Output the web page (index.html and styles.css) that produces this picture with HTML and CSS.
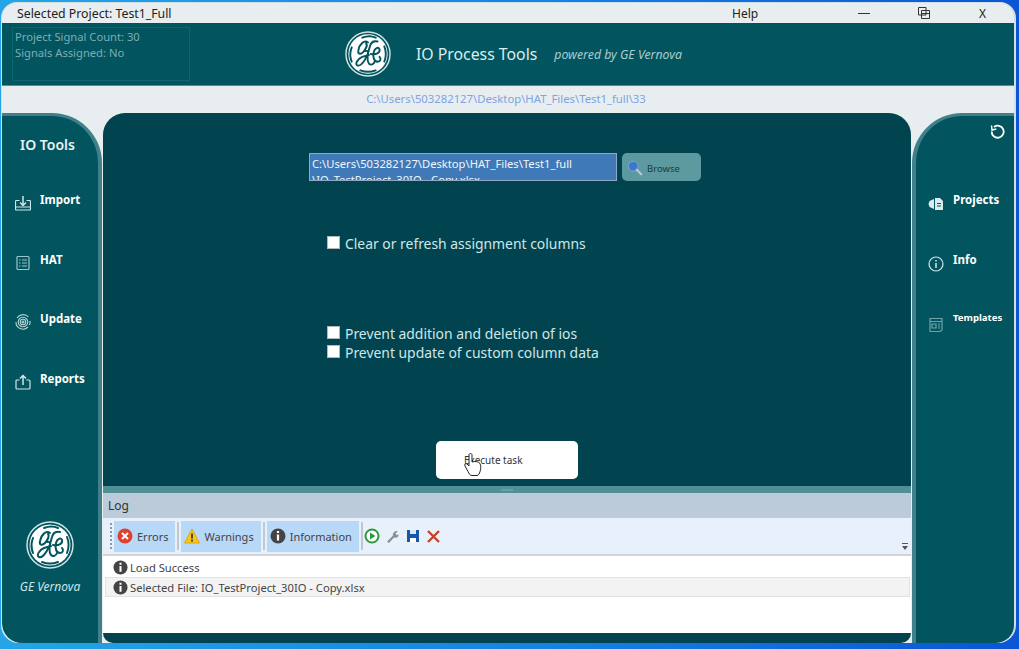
FILE: index.html
```html
<!DOCTYPE html>
<html lang="en">

<head>
    <meta charset="UTF-8">
    <title>IO Process Tools</title>
    <link rel="stylesheet" href="styles.css">
</head>

<body>
    <svg class="defs" width="0" height="0">
        <symbol id="geLogo" viewBox="0 0 48 48">
            <circle cx="24" cy="24" r="23" fill="#02545f" stroke="#cfe3e4" stroke-width="1.5" />
            <circle cx="24" cy="24" r="20.5" fill="#fff" />
            <g fill="none" stroke="#02545f" stroke-width="2" stroke-linecap="round">
                <path d="M18 7c5-2 10-2 14 0" />
                <path d="M7 17c-2 5-2 10 0 15" />
                <path d="M41 16c2 5 2 11 0 16" />
                <path d="M16 41c5 2 11 2 16 0" />
                <path d="M24 12c-4-3-9 2-10 8-1 4 2 5 5 2 3-4 5-7 3-9" />
                <path d="M21 21c3-1 4 1 2 5-3 6-7 11-10 10-3-1 0-7 5-9l7-2" />
                <path d="M34 11c-4-1-7 1-8 5-2 6-4 14-1 18 2 2 5 1 6-2" />
                <path d="M27 24c5 1 10-1 9-5-1-3-5-1-6 3-1 5 0 10 4 10 3 0 4-3 2-5" />
            </g>
        </symbol>
        <symbol id="infoIcon" viewBox="0 0 16 16">
            <circle cx="8" cy="8" r="7.500" fill="#444" />
            <path d="M8 6.500v6M8 3v2" stroke="#fff" stroke-width="2.200" />
        </symbol>
    </svg>

    <div class="window">
        <div class="titlebar">
            <span class="title">Selected Project: Test1_Full</span>
            <span class="help">Help</span>
            <span class="win-min"></span>
            <svg class="win-max" width="12" height="12" viewBox="0 0 12 12" fill="none" stroke="#333">
                <path d="M.5 8V.5H8V8z" />
                <path d="M3.5 3.5h8v8h-8zM3.5 6.5h8" />
            </svg>
            <span class="win-close">X</span>
        </div>

        <div class="header">
            <div class="signal-box">
                <div>Project Signal Count: 30</div>
                <div>Signals Assigned: No</div>
            </div>
            <svg class="header-logo" width="46" height="46"><use href="#geLogo" /></svg>
            <span class="app-name">IO Process Tools</span>
            <span class="powered">powered by GE Vernova</span>
        </div>

        <div class="path-strip">C:\Users\503282127\Desktop\HAT_Files\Test1_full\33</div>

        <div class="content">
            <div class="side side-left">
                <div class="side-title">IO Tools</div>
                <div class="nav-item">
                    <svg class="nav-icon" viewBox="0 0 16 16" fill="none" stroke="#cfe6e8" stroke-width="1.2">
                        <path d="M4.5 5.5H1.5a1 1 0 0 0-1 1V14a1 1 0 0 0 1 1h13a1 1 0 0 0 1-1V6.500a1 1 0 0 0-1-1h-3" />
                        <path d="M8 1v9M5 7.500 8 10.500l3-3" stroke-width="1.500" />
                        <path d="M.5 12h15" />
                    </svg>
                    <span>Import</span>
                </div>
                <div class="nav-item">
                    <svg class="nav-icon" viewBox="0 0 16 16" fill="none" stroke="#9cc4c8" stroke-width="1.2">
                        <rect x="2" y="1.5" width="12" height="13" rx="1" />
                        <path d="M4 5h1.500M7 5h5M4 8h1.500M7 8h5M4 11h1.500M7 11h5" />
                    </svg>
                    <span>HAT</span>
                </div>
                <div class="nav-item">
                    <svg class="nav-icon" viewBox="0 0 16 16" fill="none" stroke="#b6d4d7" stroke-width="1.1">
                        <path d="M13.500 3A7.300 7.300 0 0 0 2 4M1 8a7 7 0 0 0 12 5M15 7a7 7 0 0 1-.6 4" />
                        <circle cx="8" cy="8" r="4.800" />
                        <circle cx="8" cy="8" r="2.800" />
                        <circle cx="8" cy="8" r="1" />
                    </svg>
                    <span>Update</span>
                </div>
                <div class="nav-item">
                    <svg class="nav-icon" viewBox="0 0 16 16" fill="none" stroke="#cfe6e8" stroke-width="1.2">
                        <path d="M4.500 6H2a1 1 0 0 0-1 1v7a1 1 0 0 0 1 1h12a1 1 0 0 0 1-1V7a1 1 0 0 0-1-1h-2.500" />
                        <path d="M8 11V1.500M5 4.500l3-3 3 3" stroke-width="1.500" />
                    </svg>
                    <span>Reports</span>
                </div>
                <div class="side-brand">
                    <svg width="48" height="48"><use href="#geLogo" /></svg>
                    <span>GE Vernova</span>
                </div>
            </div>

            <div class="main">
                <div class="task-area">
                    <div class="file-row">
                        <div class="file-input">C:\Users\503282127\Desktop\HAT_Files\Test1_full<br>\IO_TestProject_30IO - Copy.xlsx</div>
                        <div class="browse">
                            <svg width="16" height="16" viewBox="0 0 18 18">
                                <circle cx="7" cy="7" r="5.500" fill="#3a78d0" stroke="#7fa8d8" />
                                <path d="M11 11l5 5" stroke="#b9c9d4" stroke-width="2.500" stroke-linecap="round" />
                            </svg>
                            <span>Browse</span>
                        </div>
                    </div>
                    <label class="check check-first"><span class="box"></span>Clear or refresh assignment columns</label>
                    <label class="check check-second"><span class="box"></span>Prevent addition and deletion of ios</label>
                    <label class="check"><span class="box"></span>Prevent update of custom column data</label>
                    <div class="execute">
                        Execute task
                        <svg class="cursor" width="18" height="24" viewBox="0 0 18 24" fill="#fff" stroke="#222" stroke-width="1">
                            <path d="M5 2c0-2 3-2 3 0v7c2-1 7-.5 8 1.500 1 2 1 6 0 8-.5 2-1.500 4-3 4H8c-2 0-3-2-4-4L1 13c-1-2 1-3 2-2l2 2z" />
                        </svg>
                    </div>
                </div>
                <div class="splitter"></div>
                <div class="log">
                    <div class="log-title">Log</div>
                    <div class="log-toolbar">
                        <span class="grip"></span>
                        <span class="tool-btn">
                            <svg width="16" height="16" viewBox="0 0 16 16">
                                <circle cx="8" cy="8" r="7.500" fill="#e2402c" />
                                <path d="M5 5l6 6M11 5l-6 6" stroke="#fff" stroke-width="2" />
                            </svg>
                            Errors
                        </span>
                        <span class="sep"></span>
                        <span class="tool-btn">
                            <svg width="16" height="16" viewBox="0 0 16 16">
                                <path d="M8 1 15.500 15H.5z" fill="#f7c51e" stroke="#e0a800" stroke-linejoin="round" />
                                <path d="M8 5.500v5M8 11.500v2" stroke="#333" stroke-width="1.700" />
                            </svg>
                            Warnings
                        </span>
                        <span class="sep"></span>
                        <span class="tool-btn">
                            <svg width="16" height="16" viewBox="0 0 16 16">
                                <use href="#infoIcon" />
                            </svg>
                            Information
                        </span>
                        <span class="sep sep-last"></span>
                        <svg class="tool-icon" width="16" height="16" viewBox="0 0 16 16">
                            <circle cx="8" cy="8" r="6.500" fill="#fff" stroke="#2f9a3c" stroke-width="2" />
                            <path d="M6 4.500 11.500 8 6 11.500z" fill="#2f9a3c" />
                        </svg>
                        <svg class="tool-icon" width="14" height="14" viewBox="0 0 14 14">
                            <path d="M1 12.500 7 6.500C6.500 4 8.500 1.500 12 2L9.500 4.500l1 1.500 2-.5C13 8 10 9.500 8 8.500l-5 5.500z" fill="#8a8f94" />
                        </svg>
                        <svg class="tool-icon" width="14" height="14" viewBox="0 0 14 14">
                            <path d="M1 1h12v12H1z" fill="#1556a8" />
                            <path d="M4 1h6v4H4z" fill="#d8e6f5" />
                            <path d="M4 9h6v4H4z" fill="#fff" />
                        </svg>
                        <svg class="tool-icon" width="15" height="15" viewBox="0 0 15 15">
                            <path d="M2 2l11 11M13 2 2 13" stroke="#c2452a" stroke-width="2.400" />
                        </svg>
                        <span class="overflow">
                            <svg width="8" height="7" viewBox="0 0 8 7">
                                <path d="M1 .5h6" stroke="#555" />
                                <path d="M1 3h6L4 7z" fill="#555" />
                            </svg>
                        </span>
                    </div>
                    <div class="log-list">
                        <div class="log-row">
                            <svg width="15" height="15" viewBox="0 0 16 16"><use href="#infoIcon" /></svg>
                            Load Success
                        </div>
                        <div class="log-row log-row-selected">
                            <svg width="15" height="15" viewBox="0 0 16 16"><use href="#infoIcon" /></svg>
                            Selected File: IO_TestProject_30IO - Copy.xlsx
                        </div>
                    </div>
                </div>
                <div class="main-foot"></div>
            </div>

            <div class="side side-right">
                <svg class="refresh" width="16" height="16" viewBox="0 0 16 16" fill="none" stroke="#fff" stroke-width="1.800">
                    <path d="M4 3a6 6 0 1 1-2.300 4.500" />
                    <path d="M1.500 1.500 2 6l4.300-1" stroke-width="1.500" />
                </svg>
                <div class="nav-item">
                    <svg class="nav-icon" viewBox="0 0 16 16" fill="#dcecee">
                        <path d="M6 3 1.500 5 .5 8l1 3L6 13z" />
                        <path d="M7 2h5l3 3v9H7zM9 7h4v1H9zM9 9.500h4v1H9z" fill-rule="evenodd" />
                    </svg>
                    <span>Projects</span>
                </div>
                <div class="nav-item">
                    <svg class="nav-icon" viewBox="0 0 16 16" fill="none" stroke="#cfe6e8" stroke-width="1.200">
                        <circle cx="8" cy="8" r="7" />
                        <path d="M8 7v5M8 4v1.500" stroke-width="1.500" />
                    </svg>
                    <span>Info</span>
                </div>
                <div class="nav-item nav-item-small">
                    <svg class="nav-icon" viewBox="0 0 16 16" fill="none" stroke="#6fa3a9" stroke-width="1.200">
                        <path d="M2 1.500h12V13l-2 1.500H2z" />
                        <path d="M2 4.500h12M4 7h4v4H4zM10 7h2M10 9h2M10 11h2" />
                    </svg>
                    <span>Templates</span>
                </div>
            </div>
        </div>
    </div>
</body>

</html>
```

FILE: styles.css
```css
* {
    box-sizing: border-box;
}

body {
    margin: 0;
    height: 649px;
    overflow: hidden;
    font-family: "Noto Sans", "Open Sans", sans-serif;
    background: linear-gradient(90deg, #25a5e6 0%, #1780e4 55%, #0b55d6 100%);
}

.defs {
    position: absolute;
}

.window {
    width: 1015px;
    height: 641px;
    margin: 2px 0 0 1px;
    background: #e8eef0;
    border-radius: 16px 16px 18px 18px;
    overflow: hidden;
    border: 1px solid #cfe0e4;
    border-width: 1px 2px 0 1px;
}

/* title bar */
.titlebar {
    height: 20px;
    display: flex;
    align-items: center;
    color: #222;
    font-size: 12px;
    padding-left: 15px;
}

.title {
    width: 715px;
    font-size: 12.300px;
}

.help {
    width: 126px;
}

.win-min {
    width: 12px;
    height: 1px;
    background: #333;
    margin-right: 48px;
}

.win-max {
    margin-right: 49px;
}

/* header */
.header {
    height: 63px;
    background: #02545f;
    border-bottom: 1px solid #4f8f96;
    display: flex;
    align-items: center;
    padding-left: 10px;
}

.signal-box {
    width: 178px;
    height: 54px;
    padding: 1px 2px;
    border: 1px solid #0c6570;
    color: #7eaeb3;
    font-size: 11.200px;
    line-height: 16px;
    margin-right: 155px;
}

.header-logo {
    margin-right: 25px;
}

.app-name {
    color: #dcecee;
    font-size: 15.800px;
    margin-right: 17px;
}

.powered {
    color: #a9cccd;
    font-size: 12.300px;
    font-style: italic;
}

.path-strip {
    height: 27px;
    line-height: 26px;
    text-align: center;
    color: #7ea3e2;
    font-size: 11.300px;
    padding-right: 4px;
}

/* body */
.content {
    display: flex;
    height: 530px;
}

.side {
    background: #02545f;
    border: 3px solid #41808a;
    display: flex;
    flex-direction: column;
    flex: none;
}

.side-left {
    width: 100px;
    border-width: 3px 4px 0 0;
    border-radius: 0 50px 0 20px;
    margin-right: 1px;
    padding-top: 19px;
}

.side-right {
    width: 103px;
    border-width: 3px 0 0 4px;
    border-radius: 50px 0 20px 0;
    margin-left: 1px;
    padding-top: 76px;
    position: relative;
}

.side-title {
    color: #e8f3f4;
    font-size: 14px;
    font-weight: 600;
    margin-left: 18px;
    margin-bottom: 38px;
}

.nav-item {
    height: 59.500px;
    display: flex;
    align-items: flex-start;
    gap: 9px;
    padding-left: 13px;
    color: #fff;
    font-size: 11.500px;
    font-weight: 700;
}

.nav-icon {
    width: 16px;
    height: 16px;
    margin-top: 3px;
    flex: none;
}

.side-right .nav-item {
    padding-left: 12px;
    gap: 9px;
}

.side-right .nav-icon {
    margin-top: 4px;
}

.side-right .nav-item-small .nav-icon {
    margin-top: 6px;
}

.nav-item-small {
    font-size: 9.600px;
}

.side-brand {
    margin-top: auto;
    margin-bottom: 48px;
    display: flex;
    flex-direction: column;
    align-items: center;
    gap: 9px;
    color: #cfe3e5;
    font-size: 12px;
    font-style: italic;
}

.refresh {
    position: absolute;
    top: 8px;
    right: 9px;
}

/* main panel */
.main {
    width: 808px;
    flex: none;
    display: flex;
    flex-direction: column;
}

.task-area {
    height: 373px;
    background: #01444f;
    border-radius: 22px 22px 0 0;
    padding: 40px 0 0 206px;
}

.file-row {
    display: flex;
    gap: 5px;
}

.file-input {
    width: 308px;
    height: 28px;
    overflow: hidden;
    background: #4079b8;
    border: 1px solid #8fa9c4;
    color: #f2f6fa;
    font-size: 11.200px;
    line-height: 16px;
    padding: 2px 0 0 2px;
    white-space: nowrap;
}

.browse {
    width: 79px;
    height: 28px;
    background: #5d9a9f;
    border-radius: 5px;
    display: flex;
    align-items: center;
    gap: 4px;
    padding: 2px 0 0 5px;
    color: #1d3a40;
    font-size: 9.500px;
}

.check {
    display: flex;
    align-items: center;
    gap: 5px;
    margin-left: 18px;
    height: 19px;
    color: #cfe7e8;
    font-size: 13.900px;
}

.check-first {
    margin-top: 53px;
}

.check-second {
    margin-top: 71px;
}

.box {
    width: 13px;
    height: 13px;
    background: #fff;
    border: 1px solid #b0b8bc;
    margin-top: -2px;
}

.execute {
    position: relative;
    width: 142px;
    height: 38px;
    margin: 79px 0 0 127px;
    background: #fff;
    border-radius: 5px;
    padding-left: 28px;
    line-height: 39px;
    color: #333;
    font-size: 10px;
}

.cursor {
    position: absolute;
    left: 28px;
    top: 12px;
}

.splitter {
    height: 7px;
    background: #4f8f96;
    display: flex;
    justify-content: center;
    align-items: center;
}

.splitter::after {
    content: "";
    width: 12px;
    height: 2px;
    background: #6d9ea3;
}

/* log */
.log {
    flex: 1;
    display: flex;
    flex-direction: column;
    background: #fff;
}

.log-title {
    height: 25px;
    line-height: 25px;
    padding-left: 5px;
    background: #bccbd9;
    color: #333;
    font-size: 12px;
}

.log-toolbar {
    position: relative;
    height: 38px;
    flex: none;
    display: flex;
    align-items: center;
    padding-left: 7px;
    background: #e8f1fb;
    border-bottom: 2px solid #d0d4d8;
    color: #444;
    font-size: 11px;
}

.grip {
    width: 2px;
    height: 26px;
    margin-right: 2px;
    border-left: 2px dotted #8a97a4;
}

.tool-btn {
    height: 31px;
    display: flex;
    align-items: center;
    gap: 4px;
    padding: 0 7px 0 3px;
    background: #b8d8f8;
    white-space: nowrap;
}

.sep {
    width: 2px;
    height: 28px;
    margin: 0 2px;
    background: #c0c8d0;
}

.sep-last {
    margin-right: 1px;
}

.tool-icon {
    margin-right: 6px;
}

.overflow {
    position: absolute;
    right: 2px;
    bottom: 1px;
}

.log-list {
    padding: 2px 1px 0 2px;
    color: #444;
    font-size: 11.200px;
    flex: 1;
}

.log-row {
    height: 19px;
    display: flex;
    align-items: center;
    gap: 2px;
    padding-left: 8px;
}

.log-row-selected {
    height: 20px;
    background: #f3f3f3;
    border: 1px solid #e2e2e2;
    padding-left: 7px;
}

.main-foot {
    height: 10px;
    flex: none;
    background: #01444f;
    border-radius: 0 0 14px 14px;
}
```
